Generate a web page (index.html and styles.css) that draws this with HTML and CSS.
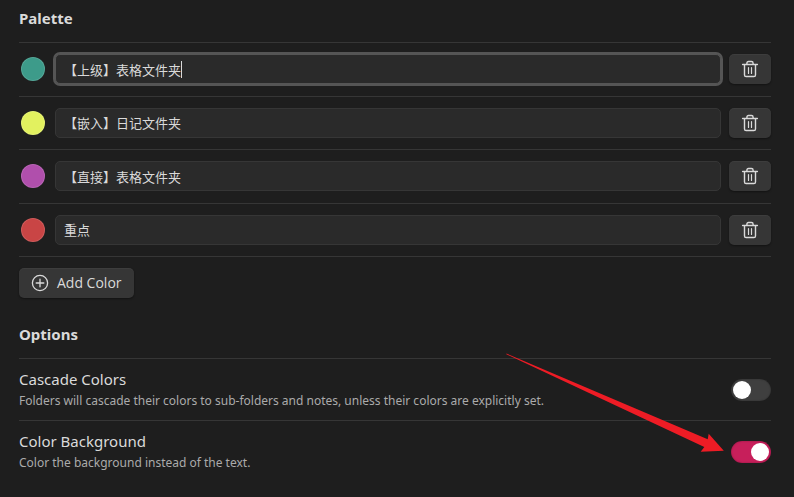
FILE: index.html
```html
<!DOCTYPE html>
<html lang="en">
<head>
<meta charset="utf-8">
<title>Folder color settings</title>
<link rel="stylesheet" href="styles.css">
</head>
<body>
<svg class="sprite" aria-hidden="true">
  <symbol id="trash" viewBox="0 0 18 18">
    <path d="M1.6 4.5h14.8M5.9 4.3V3.2c0-1 .6-1.7 1.6-1.7h3c1 0 1.6.7 1.6 1.7v1.1M3.5 4.7v10.2c0 1 .6 1.6 1.6 1.6h7.8c1 0 1.6-.6 1.6-1.6V4.7" stroke-width="1.4"/>
    <path d="M7.5 7.5v6M10.5 7.5v6" stroke-width="1.2"/>
  </symbol>
</svg>
<main class="settings">
  <section>
    <h2 class="heading">Palette</h2>
    <ul class="palette">
      <li class="color-row">
        <button class="swatch teal" type="button" aria-label="Pick color"></button>
        <div class="field focused">
          <input class="name" type="text" aria-label="Color name" value="【上级】表格文件夹">
          <span class="caret"></span>
        </div>
        <button class="button" type="button" aria-label="Delete color"><svg class="icon"><use href="#trash"/></svg></button>
      </li>
      <li class="color-row">
        <button class="swatch yellow" type="button" aria-label="Pick color"></button>
        <div class="field"><input class="name" type="text" aria-label="Color name" value="【嵌入】日记文件夹"></div>
        <button class="button" type="button" aria-label="Delete color"><svg class="icon"><use href="#trash"/></svg></button>
      </li>
      <li class="color-row">
        <button class="swatch purple" type="button" aria-label="Pick color"></button>
        <div class="field"><input class="name" type="text" aria-label="Color name" value="【直接】表格文件夹"></div>
        <button class="button" type="button" aria-label="Delete color"><svg class="icon"><use href="#trash"/></svg></button>
      </li>
      <li class="color-row">
        <button class="swatch red" type="button" aria-label="Pick color"></button>
        <div class="field"><input class="name" type="text" aria-label="Color name" value="重点"></div>
        <button class="button" type="button" aria-label="Delete color"><svg class="icon"><use href="#trash"/></svg></button>
      </li>
    </ul>
    <div class="add-row">
      <button class="button" type="button">
        <svg class="icon" viewBox="0 0 18 18"><circle cx="9" cy="9" r="7.6" stroke-width="1.3"/><path d="M9 5.2v7.6M5.2 9h7.6" stroke-width="1.3"/></svg>
        Add Color
      </button>
    </div>
  </section>
  <section>
    <h2 class="heading">Options</h2>
    <div class="option">
      <div class="info">
        <label class="title" for="cascade">Cascade Colors</label>
        <p class="description" id="cascade-text">Folders will cascade their colors to sub-folders and notes, unless their colors are explicitly set.</p>
      </div>
      <div class="control"><input class="toggle" id="cascade" type="checkbox" aria-describedby="cascade-text"></div>
    </div>
    <div class="option">
      <div class="info">
        <label class="title" for="background">Color Background</label>
        <p class="description" id="background-text">Color the background instead of the text.</p>
      </div>
      <div class="control">
        <svg class="arrow" viewBox="0 0 220 100" aria-hidden="true"><path d="M1.5 .5 202.7 86.2 203.7 80.7 218.8 97.8 195.7 98.7 199.3 94 1.3 1.2Z"/></svg>
        <input class="toggle" id="background" type="checkbox" aria-describedby="background-text" checked>
      </div>
    </div>
  </section>
</main>
</body>
</html>
```

FILE: styles.css
```css
:root {
  --page: #1e1e1e;
  --line: #363636;
  --field: #2a2a2a;
  --button: #363636;
  --focus: #555;
  --text: #dadada;
  --muted: #ababab;
}

* { box-sizing: border-box; }

body {
  margin: 0;
  background: var(--page);
  color: var(--text);
  font: 15px/20px "Noto Sans", "Noto Sans CJK SC", sans-serif;
}

.sprite { display: none; }

.settings { padding: 8px 23px 0 19px; }

.heading {
  margin: 0;
  padding-bottom: 14px;
  font-size: 15px;
  line-height: 20px;
  font-weight: 700;
}

.palette {
  display: grid;
  grid-auto-rows: 1fr;
  min-height: 214px;
  margin: 0;
  padding: 0;
  list-style: none;
}

.color-row {
  display: flex;
  align-items: center;
  gap: 8px;
  border-top: 1px solid var(--line);
}

.swatch {
  width: 24px;
  height: 24px;
  margin: 0 2px;
  padding: 0;
  border: 1px solid rgb(255 255 255 / 12%);
  border-radius: 50%;
}

.teal { background-color: #3d9b8a; }
.yellow { background-color: #e2f15f; }
.purple { background-color: #b04fac; }
.red { background-color: #c94545; }

.field {
  position: relative;
  flex: 1;
  display: flex;
}

.name {
  width: 100%;
  height: 30px;
  padding: 0 8px;
  border: 1px solid var(--line);
  border-radius: 5px;
  outline: 0;
  background: var(--field);
  color: var(--text);
  font: 13px "Noto Sans CJK SC", sans-serif;
}

.focused .name {
  border-color: var(--focus);
  box-shadow: 0 0 0 2px var(--focus);
}

.caret {
  position: absolute;
  top: 7px;
  left: calc(9px + 9 * 13px);
  width: 1px;
  height: 17px;
  background: var(--text);
}

.button {
  display: flex;
  align-items: center;
  gap: 8px;
  height: 30px;
  padding: 0 12px;
  border: 0;
  border-radius: 5px;
  background: var(--button);
  box-shadow: 0 1px 2px rgb(0 0 0 / 40%), inset 0 1px 0 rgb(255 255 255 / 4%);
  color: var(--text);
  font: 14px/20px "Open Sans", sans-serif;
}

.icon {
  width: 18px;
  height: 18px;
  fill: none;
  stroke: currentColor;
  stroke-linecap: round;
  stroke-linejoin: round;
}

.add-row {
  padding: 11px 0 26px;
  border-top: 1px solid var(--line);
}

.option {
  display: flex;
  align-items: center;
  justify-content: space-between;
  padding: 10px 0;
  border-top: 1px solid var(--line);
}

.title { display: block; }

.description {
  margin: 3px 0 0;
  color: var(--muted);
  font-size: 12px;
  line-height: 18px;
}

.control {
  position: relative;
  display: flex;
}

.toggle {
  appearance: none;
  display: flex;
  align-items: center;
  width: 40px;
  height: 22px;
  margin: 0;
  padding: 2px;
  border-radius: 11px;
  background: #3f3f3f;
  box-shadow: inset 0 0 2px rgb(0 0 0 / 35%);
}

.toggle::before {
  content: "";
  width: 18px;
  height: 18px;
  border-radius: 50%;
  background: #fff;
}

.toggle:checked {
  justify-content: flex-end;
  background: #c71f5b;
}

.arrow {
  position: absolute;
  right: calc(100% + 6px);
  bottom: 10px;
  width: 220px;
  height: 100px;
  fill: #ee1c25;
  pointer-events: none;
}
```
